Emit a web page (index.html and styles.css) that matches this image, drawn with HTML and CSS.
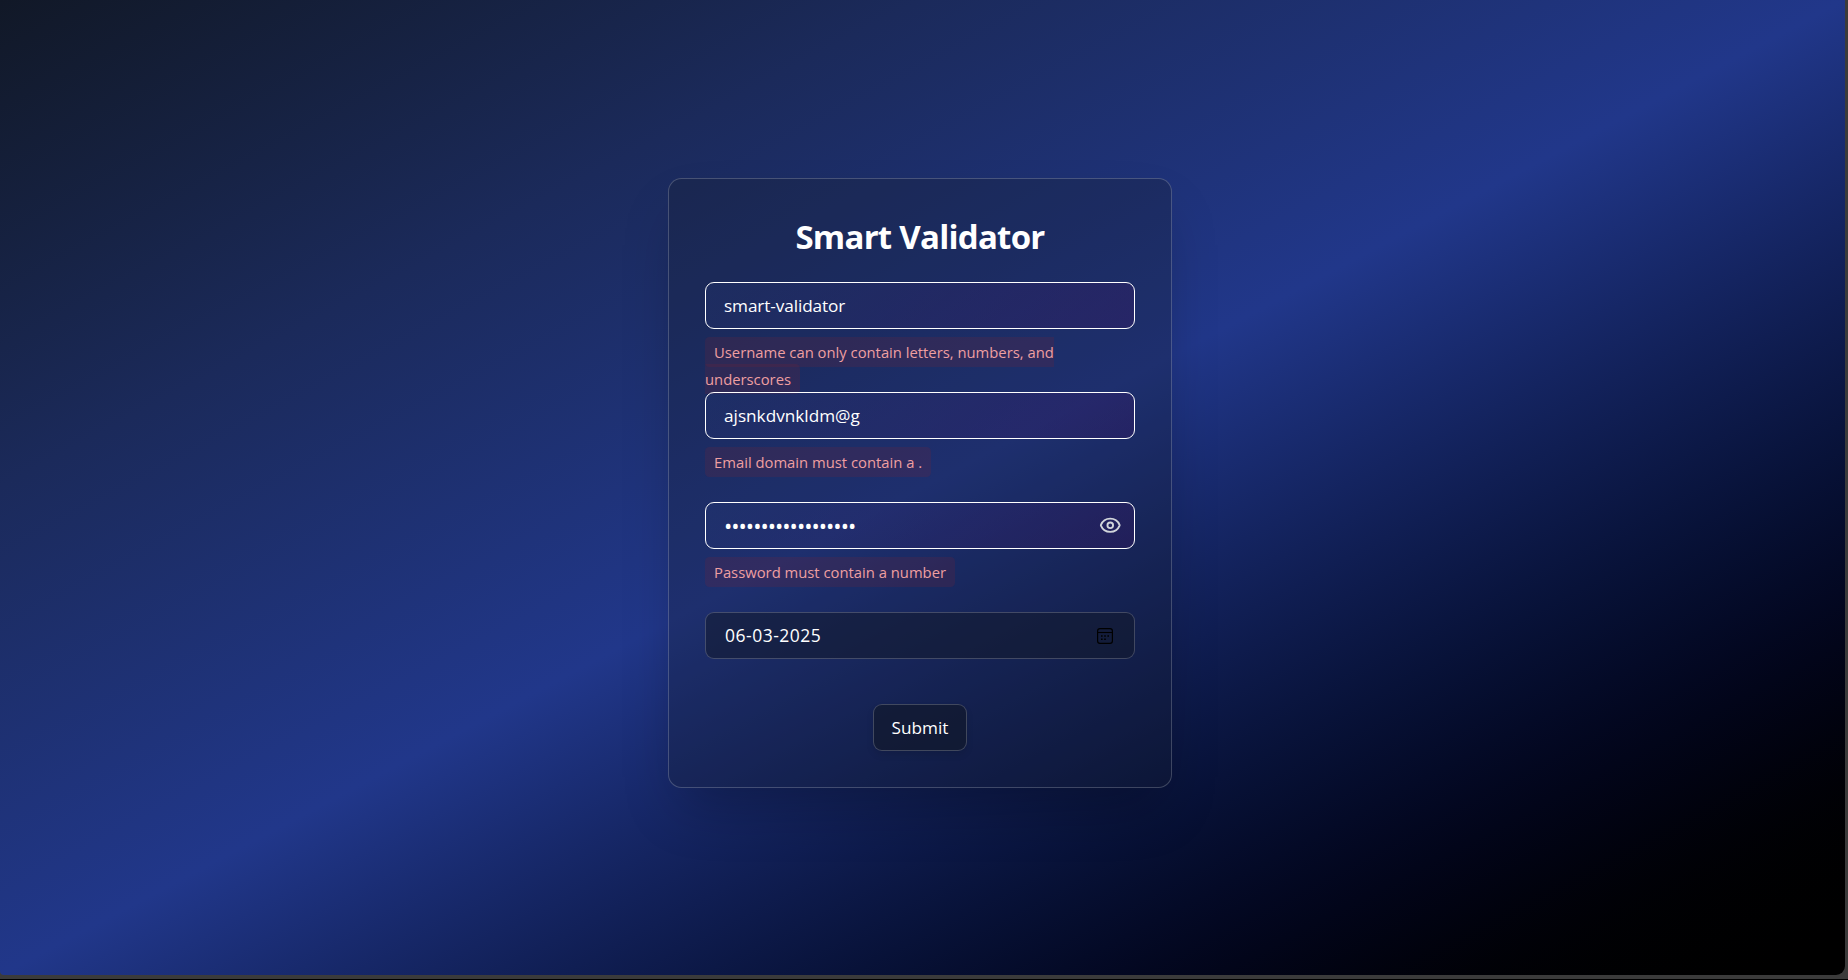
FILE: index.html
```html
<!DOCTYPE html>
<html lang="en">
<head>
<meta charset="utf-8">
<title>Smart Validator</title>
<link rel="stylesheet" href="styles.css">
</head>
<body>
<main class="page">
  <form class="card">
    <h1 class="title">Smart Validator</h1>
    <div class="field">
      <div class="control invalid"><span class="value username">smart-validator</span></div>
      <div class="message"><span class="error">Username can only contain letters, numbers, and underscores</span></div>
    </div>
    <div class="field">
      <div class="control invalid"><span class="value">ajsnkdvnkldm@g</span></div>
      <div class="message"><span class="error">Email domain must contain a .</span></div>
    </div>
    <div class="field">
      <div class="control invalid"><span class="value dots">••••••••••••••••••</span>
        <svg class="eye" viewBox="0 0 24 24" fill="none" stroke="currentColor" stroke-width="2" stroke-linecap="round" stroke-linejoin="round"><path d="M2.06 12.35a1 1 0 0 1 0-.7 10.75 10.75 0 0 1 19.88 0 1 1 0 0 1 0 .7 10.75 10.75 0 0 1-19.88 0"/><circle cx="12" cy="12" r="3"/></svg>
      </div>
      <div class="message"><span class="error">Password must contain a number</span></div>
    </div>
    <div class="control date"><span class="value day">06-03-2025</span>
      <svg class="calendar" viewBox="0 0 16 16" fill="none" stroke="#000"><rect x=".6" y=".6" width="14.8" height="14.8" rx="2.4" stroke-width="1.2"/><path d="M1 4.5h14" stroke-width="1.1"/><path d="M4 8h1.6M7.2 8h1.6M10.4 8H12M4 11.2h1.6M7.2 11.2h1.6" stroke-width="1.6"/></svg>
    </div>
    <button class="submit" type="button">Submit</button>
  </form>
</main>
</body>
</html>
```
FILE: styles.css
```css
* { box-sizing: border-box; }

body {
  margin: 0;
  height: 980px;
  overflow: hidden;
  background: #3b3b3b;
  border-bottom: 1px solid #000;
  font-family: "Segoe UI", "Open Sans", sans-serif;
  color: #fff;
}

.page {
  width: 1845px;
  height: 975px;
  padding: 0 5px 9px 0;
  display: flex;
  align-items: center;
  justify-content: center;
  border-radius: 0 0 9px 4px;
  background: linear-gradient(to bottom right in oklab, #111827, #1b2a5b 25%, #21378a 50%, #000);
}

.card {
  width: 504px;
  height: 610px;
  padding: 36px;
  display: flex;
  flex-direction: column;
  border: 1px solid rgba(255, 255, 255, .2);
  border-radius: 13.5px;
  background: rgba(24, 31, 48, .3);
  box-shadow: 0 28px 56px -13px rgba(0, 0, 0, .25);
}

.title {
  margin: 0;
  padding-top: 1.5px;
  height: 67px;
  font-size: 33px;
  line-height: 40.5px;
  font-weight: 700;
  text-align: center;
  letter-spacing: -.75px;
}

.field { height: 110px; }

.control {
  height: 47px;
  padding: 0 13px 0 18px;
  display: flex;
  align-items: center;
  justify-content: space-between;
  border: 1px solid rgba(255, 255, 255, .2);
  border-radius: 9px;
  font-size: 17.2px;
  line-height: 27px;
}

.invalid {
  border-color: #fff;
  background: linear-gradient(135deg, rgba(38, 60, 125, .2), rgba(59, 17, 95, .3));
}

.username { letter-spacing: -.1px; }
.dots { font-size: 22px; letter-spacing: -.98px; }
.day { margin-left: 1px; font-size: 17.5px; letter-spacing: .5px; }

.date { flex: none; background: rgba(17, 24, 39, .5); }

.message {
  padding-top: 10px;
  font-size: 14.8px;
  line-height: 27px;
}

.error {
  padding: 4.9px 9px;
  border-radius: 4.5px;
  background: rgba(127, 35, 50, .2);
  color: #ee9fa1;
}

.eye { width: 22.5px; height: 22.5px; color: #d1d5db; }
.calendar { width: 16px; height: 16px; margin-right: 8px; }

.submit {
  align-self: center;
  width: 94px;
  height: 47px;
  margin-top: 45px;
  border: 1px solid rgba(255, 255, 255, .2);
  border-radius: 9px;
  background: rgba(17, 24, 39, .6);
  box-shadow: 0 4px 7px rgba(0, 0, 0, .1);
  color: #fff;
  font: 17.2px "Segoe UI", "Open Sans", sans-serif;
  padding: 0;
}
```
